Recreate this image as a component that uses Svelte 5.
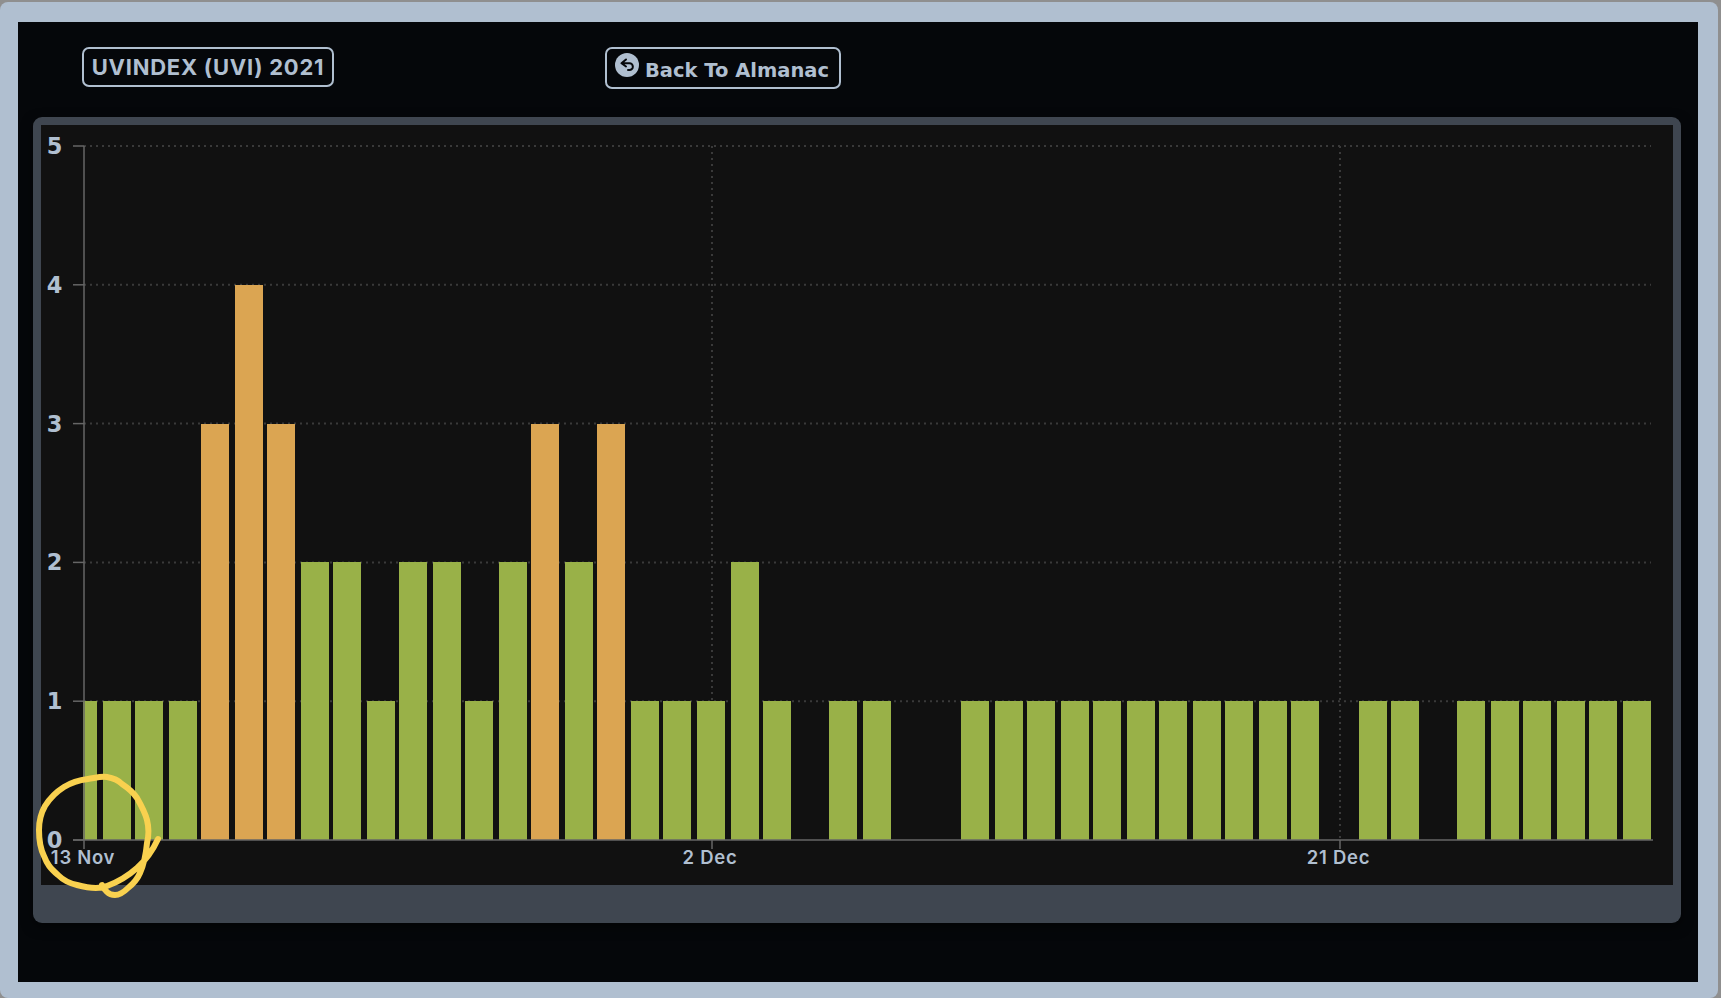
<script>
  // uv index per day, starting 13 Nov
  const values = [1,1,1,1,3,4,3,2,2,1,2,2,1,2,3,2,3,1,1,1,2,1,0,1,1,0,0,1,1,1,1,1,1,1,1,1,1,1,0,1,1,0,1,1,1,1,1,1];
  const axisX = 84;
  const axisY = 840;
  const right = 1653;
  const unitY = 138.8;

  const bars = values
    .map((v, i) => {
      // bars land on odd pixels, first one is cut off by the axis
      const start = 2 * Math.floor((69.07 + 33.05 * i) / 2) + 1;
      const x = Math.max(start, 83);
      return { x, w: start + 28 - x, h: v * unitY, v };
    })
    .filter((b) => b.v > 0);

  const levels = [0, 1, 2, 3, 4, 5];
  const ticks = [
    { x: 84, label: "13 Nov", labelX: 83 },
    { x: 712, label: "2 Dec", labelX: 710 },
    { x: 1340, label: "21 Dec", labelX: 1338.500 },
  ];
</script>

<div class="frame">
  <div class="screen">
    <div class="toolbar">
      <div class="title">UVINDEX (UVI) 2021</div>
      <button class="back">
        <svg class="back-icon" viewBox="0 0 24 24" width="24" height="24">
          <circle cx="12" cy="12" r="12" fill="#b0bfd0" />
          <path d="M11 6.500 6.500 10.300 11 13.500M6.500 10.300h8a3.300 3.300 0 0 1 0 6.700H13" fill="none" stroke="#05070a" stroke-width="2" stroke-linecap="round" stroke-linejoin="round" />
        </svg>
        <span class="back-text">Back To Almanac</span>
      </button>
    </div>

    <div class="panel">
      <svg class="chart" viewBox="41 125 1632 760" width="1632" height="760">
        {#each levels as l}
          {#if l > 0}
            <line class="grid" x1={axisX} x2={right - 2} y1={axisY - l * unitY} y2={axisY - l * unitY} />
          {/if}
          <line class="axis" x1="73" x2={axisX} y1={axisY - l * unitY} y2={axisY - l * unitY} />
          <text class="y-label" x="54.500" y={axisY - l * unitY + 8}>{l}</text>
        {/each}
        {#each ticks.slice(1) as t}
          <line class="grid" x1={t.x} x2={t.x} y1="146" y2={axisY} />
        {/each}
        {#each bars as b}
          <rect class="bar" x={b.x} y={axisY - b.h} width={b.w} height={b.h} fill={b.v >= 3 ? "#dba552" : "#99b148"} />
        {/each}
        <line class="axis" x1="73" x2={right} y1={axisY} y2={axisY} stroke-width="2" />
        <line class="axis" x1={axisX} x2={axisX} y1="146" y2={axisY} />
        {#each ticks as t}
          <line class="axis" x1={t.x} x2={t.x} y1={axisY} y2="849" />
          <text class="x-label" x={t.labelX} y="864">{t.label}</text>
        {/each}
      </svg>
    </div>
  </div>

  <svg class="scribble" viewBox="0 740 200 200" width="200" height="200">
    <path d="M158 839C152 852 146 860 137 868C128 876 118 882 107 886C100 889 88 888 77 885C68 883 63 880 58 875C50 868 47 864 44 856C40 848 39 840 39 830C39 820 41 813 45 806C50 798 56 792 64 787C72 782 80 780 88 779C95 778 101 776 107 777C113 778 118 780 122 784C128 788 133 792 137 798C141 805 145 812 147 820C149 828 149 835 147 843C146 854 144 864 140 873C137 880 133 884 128 888C124 892 120 895 115 895C112 895 109 894 107 892C105 890 103 888 102 885" fill="none" stroke="#f9d14f" stroke-width="6" stroke-linecap="round" stroke-linejoin="round" />
  </svg>
</div>

<style>
  :global(body) {
    margin: 0;
    background: #8f8f8f;
  }

  .frame {
    position: relative;
    box-sizing: border-box;
    width: 1718px;
    height: 996px;
    margin-top: 2px;
    padding: 20px 20px 16px 18px;
    background: #b0bfd0;
    border-radius: 8px;
  }

  .screen {
    height: 960px;
    background: #05070a;
    padding: 25px 17px 0 15px;
    box-sizing: border-box;
  }

  .toolbar {
    display: flex;
    align-items: flex-start;
    height: 70px;
    padding-left: 49px;
    gap: 271px;
  }

  .title {
    box-sizing: border-box;
    width: 252px;
    height: 40px;
    border: 2px solid #b0bfd0;
    border-radius: 7px;
    color: #b0bfd0;
    font: 700 22px/36px Inter, sans-serif;
    letter-spacing: 0.750px;
    text-align: center;
    white-space: nowrap;
  }

  .back {
    display: flex;
    align-items: flex-start;
    gap: 6px;
    box-sizing: border-box;
    width: 236px;
    height: 42px;
    padding: 4px 0 0 8px;
    background: none;
    border: 2px solid #b0bfd0;
    border-radius: 7px;
    color: #b0bfd0;
    font: 700 19.500px/29px "DejaVu Sans", sans-serif;
    white-space: nowrap;
  }

  .back-icon {
    flex: none;
  }

  .back-text {
    margin-top: 3px;
  }

  .panel {
    box-sizing: border-box;
    height: 806px;
    padding: 8px 8px 38px;
    background: #3f4650;
    border-radius: 9px;
    box-shadow: 0 4px 12px rgba(0, 0, 0, 0.5);
  }

  .chart {
    display: block;
    background: #111;
  }

  .bar {
    shape-rendering: crispEdges;
  }

  .grid {
    stroke: #3a3a3a;
    stroke-width: 2;
    stroke-dasharray: 2 4;
  }

  .axis {
    stroke: #666;
    stroke-width: 1.500;
  }

  text {
    fill: #b0bfd0;
  }

  .y-label {
    font: 700 22.500px "DejaVu Sans", sans-serif;
    text-anchor: middle;
  }

  .x-label {
    font: 600 18.500px Inter, sans-serif;
    letter-spacing: 0.700px;
    text-anchor: middle;
  }

  .scribble {
    position: absolute;
    left: 0;
    top: 738px;
    pointer-events: none;
  }
</style>
